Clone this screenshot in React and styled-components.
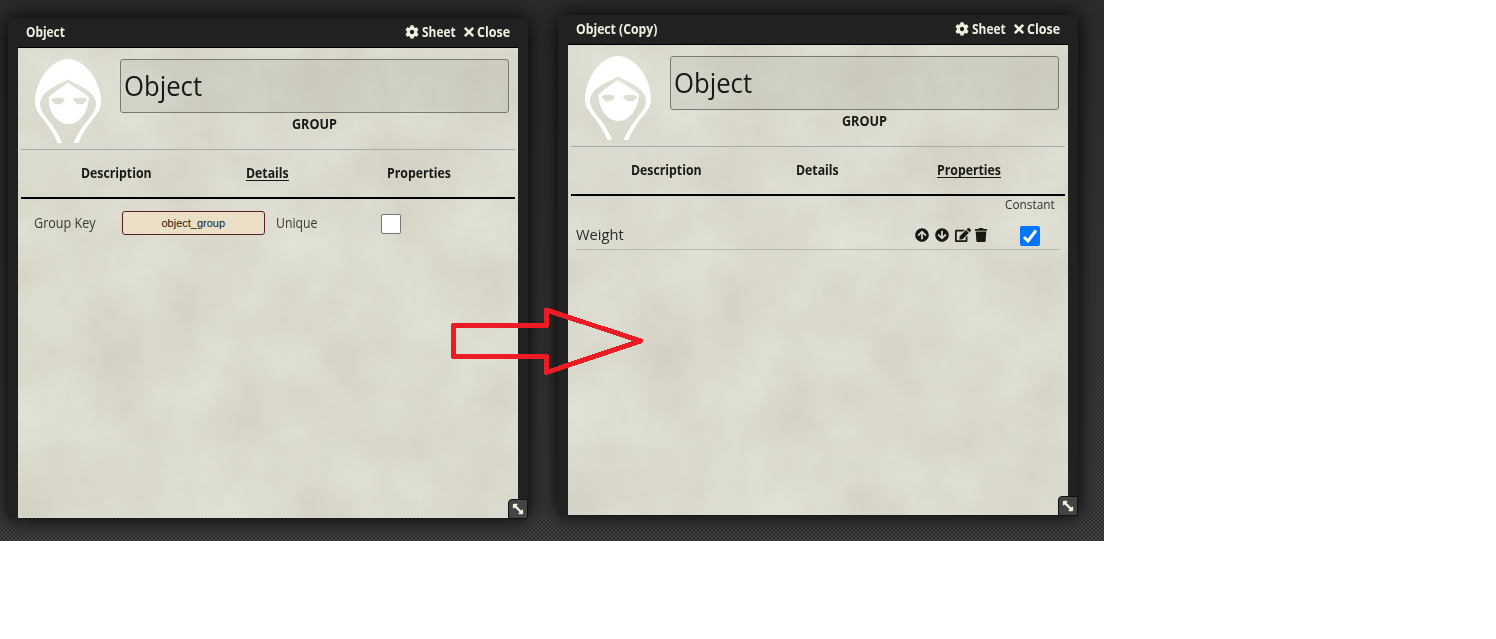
import React, { useLayoutEffect, useRef, useState } from "react";
import styled, { createGlobalStyle, css } from "styled-components";
import {
  FaCog,
  FaTimes,
  FaArrowCircleUp,
  FaArrowCircleDown,
  FaEdit,
  FaTrash,
  FaArrowsAltH,
} from "react-icons/fa";

const GlobalStyle = createGlobalStyle`
  * { box-sizing: border-box; }
  body { margin: 0; background: #fff; font-family: "Open Sans", "Noto Sans", sans-serif; color: #191813; }
`;

const Desktop = styled.main`
  position: relative;
  display: flex;
  gap: 30px;
  width: 1104px;
  height: 541px;
  padding: 15px 0 0 8px;
  overflow: hidden;
  background:
    repeating-linear-gradient(45deg, rgba(0, 0, 0, 0.2) 0 1px, transparent 1px 2.828px),
    repeating-linear-gradient(-45deg, rgba(0, 0, 0, 0.2) 0 1px, transparent 1px 2.828px),
    linear-gradient(#353535, #454545);
`;

const Window = styled.section`
  position: relative;
  display: flex;
  flex-direction: column;
  flex: none;
  width: 520px;
  height: 500px;
  margin-top: ${(p) => p.$drop}px;
  padding: 0 10px;
  background:
    repeating-linear-gradient(45deg, rgba(0, 0, 0, 0.16) 0 1px, transparent 1px 2.828px),
    #242424;
  box-shadow: 0 0 20px #000;
`;

const TitleBar = styled.header`
  display: flex;
  align-items: center;
  flex: none;
  height: 30px;
  padding: 0 8px 1px;
  border-bottom: 1px solid #000;
  color: #f0f0e0;
`;

const TitleActions = styled.div`
  display: flex;
  align-items: center;
  gap: 6px;
  margin-left: auto;
`;

const TitleAction = styled.span`
  display: flex;
  align-items: center;
  gap: ${(p) => p.$gap}px;
`;

const Sheet = styled.div`
  position: relative;
  flex: 1;
  padding: 0 3px;
  background: #dad9cd;
`;

const Parchment = styled.svg`
  position: absolute;
  inset: 0;
  width: 100%;
  height: 100%;
`;

const SheetBody = styled.div`
  position: relative;
`;

const SheetHeader = styled.div`
  display: flex;
  height: 102px;
  padding: 11px 6px 0 14px;
  border-bottom: 1px solid #aaa;
`;

const Avatar = styled.svg`
  flex: none;
  width: 66px;
  height: 84px;
  margin-right: 19px;
`;

const NameColumn = styled.div`
  display: flex;
  flex-direction: column;
  align-items: center;
  gap: 1px;
  flex: 1;
`;

const NameField = styled.div`
  display: flex;
  align-items: center;
  align-self: stretch;
  height: 54px;
  padding: 0 0 1px 3px;
  border: 1px solid #7a7971;
  border-radius: 3px;
  background: rgba(0, 0, 0, 0.05);
`;

const Tabs = styled.nav`
  display: flex;
  height: 49px;
  padding: 0 20px 2px;
  border-bottom: 2px solid #000;
`;

const Tab = styled.div`
  display: flex;
  flex: 1;
  align-items: center;
  justify-content: center;
`;

const DetailsRow = styled.div`
  display: flex;
  align-items: center;
  height: 24px;
  margin: 12px 13px 0;
`;

const KeyField = styled.div`
  display: flex;
  align-items: center;
  justify-content: center;
  width: 143px;
  height: 24px;
  margin: 0 11px 0 26px;
  border: 1px solid #561f24;
  border-radius: 3px;
  background: #ebdfc5;
`;

const CheckBox = styled.span`
  display: flex;
  align-items: center;
  justify-content: center;
  width: 20px;
  height: 20px;
  border-radius: 2px;
  background: ${(p) => (p.$checked ? "#0075ff" : "#fff")};
  border: ${(p) => (p.$checked ? "none" : "1px solid #767676")};
  svg { width: 16px; height: 16px; }
`;

const UniqueCheck = styled.div`
  margin: 2px 0 0 64px;
`;

const ColumnHeads = styled.div`
  display: flex;
  align-items: flex-end;
  justify-content: flex-end;
  height: 17px;
  padding: 0 10px 0 0;
`;

const PropertyRow = styled.div`
  display: flex;
  align-items: center;
  height: 37px;
  margin: 0 5px;
  padding: 7px 20px 0 0;
  border-bottom: 1px solid #b8b8b3;
`;

const RowControls = styled.div`
  display: flex;
  align-items: center;
  gap: 6px;
  margin: 0 32px 0 auto;
`;

const DeleteIcon = styled(FaTrash)`
  margin-left: -3px;
`;

const RowCheck = styled.div`
  margin-top: 2px;
`;

const ResizeHandle = styled.div`
  position: absolute;
  right: 0;
  bottom: -1px;
  display: flex;
  align-items: center;
  justify-content: center;
  width: 20px;
  height: 20px;
  border: 1px solid #111;
  border-radius: 4px 0 0 0;
  background: #444;
  color: #f0f0e0;
  svg { transform: rotate(45deg); }
`;

const FlowArrow = styled.svg`
  position: absolute;
  left: 448px;
  top: 304px;
  width: 200px;
  height: 76px;
`;

const TextSlot = styled.span`
  display: inline-flex;
  flex: none;
  width: ${(p) => p.$width}px;
  height: ${(p) => Math.round(p.$size * 1.4)}px;
  line-height: ${(p) => Math.round(p.$size * 1.4)}px;
  font-size: ${(p) => p.$size}px;
  font-weight: ${(p) => p.$weight};
  color: ${(p) => p.$color || "inherit"};
  white-space: nowrap;
  ${(p) => p.$sans && css`font-family: "Liberation Sans", Arial, sans-serif;`}
  ${(p) => p.$active && css`
    background: linear-gradient(currentColor, currentColor) 0 calc(100% - 2px) / 100% 1px no-repeat;
  `}
`;

const TextRun = styled.span`
  display: inline-block;
  flex: none;
  transform-origin: 0 50%;
`;

/* Condenses a run of text so that it fills exactly the width of its slot. */
function Label({ children, width, size = 14, weight = 400, sans, active, color }) {
  const run = useRef(null);
  const [scale, setScale] = useState(1);
  useLayoutEffect(() => {
    setScale(width / run.current.offsetWidth);
  }, [width]);
  return (
    <TextSlot $width={width} $size={size} $weight={weight} $sans={sans} $active={active} $color={color}>
      <TextRun ref={run} style={{ transform: `scaleX(${scale})` }}>{children}</TextRun>
    </TextSlot>
  );
}

function HoodedFigure() {
  return (
    <Avatar viewBox="0 0 66 84">
      <path
        fill="#fff"
        d="M33 0C41 0 49 5 56 14C62 22 66 33 66 42C66 47 65 50.500 62.700 53.500C60 58 57 61 54.500 64.500C51 70 48 74 46 78L43.500 84H38.500C41 78 44 73 47.500 68C51 63 54 60 56.500 56C59.500 52 61 49 61 45C61 41 59 37 55 33C49 28 41 25 33 20.500C25 25 17 28 11 33C7 37 5 41 5 45C5 49 6.500 52 9.500 56C12 60 15 63 18.500 68C22 73 25 78 27 84H22.500L20 78C18 74 15 70 11.500 64.500C9 61 6 58 3.300 53.500C1 50.500 0 47 0 42C0 33 4 22 10 14C17 5 25 0 33 0Z"
      />
      <path
        fill="#fff"
        fillRule="evenodd"
        d="M33 24C40 29 48 33 54 38.500C53.500 45 52 51 48 57C44 62 39 65 33.500 65C28 65 23 62 19 57C15 51 14 45 13.500 38.500C19 33 26 29 33 24ZM16.500 40C17.500 43 20 45.300 23 45.300C27 45.300 29 43 30 40C26 38.400 20 38.400 16.500 40ZM38 40C39 43 42 45.300 45 45.300C49 45.300 51 43 52 40C48 38.400 42 38.400 38 40Z"
      />
    </Avatar>
  );
}

function ParchmentTexture({ id }) {
  return (
    <Parchment aria-hidden="true">
      <filter id={id} x="0" y="0" width="100%" height="100%" colorInterpolationFilters="sRGB">
        <feTurbulence type="fractalNoise" baseFrequency="0.014 0.012" numOctaves="6" seed="8" />
        <feColorMatrix
          values="0.09 0 0 0 0.815
                  0.09 0 0 0 0.810
                  0.1 0 0 0 0.757
                  0 0 0 0 1"
        />
      </filter>
      <rect width="100%" height="100%" filter={`url(#${id})`} />
    </Parchment>
  );
}

const TABS = [
  ["Description", 71],
  ["Details", 43],
  ["Properties", 64],
];

function SheetWindow({ id, title, titleWidth, drop, active, children }) {
  return (
    <Window $drop={drop}>
      <TitleBar>
        <Label width={titleWidth} weight={700}>{title}</Label>
        <TitleActions>
          <TitleAction $gap={3}>
            <FaCog size={14} />
            <Label width={34} weight={700}>Sheet</Label>
          </TitleAction>
          <TitleAction $gap={1}>
            <FaTimes size={14} />
            <Label width={33} weight={700}>Close</Label>
          </TitleAction>
        </TitleActions>
      </TitleBar>
      <Sheet>
        <ParchmentTexture id={id} />
        <SheetBody>
          <SheetHeader>
            <HoodedFigure />
            <NameColumn>
              <NameField>
                <Label width={78} size={27}>Object</Label>
              </NameField>
              <Label width={45} weight={700}>GROUP</Label>
            </NameColumn>
          </SheetHeader>
          <Tabs>
            {TABS.map(([name, width]) => (
              <Tab key={name}>
                <Label width={width} weight={700} active={name === active}>{name}</Label>
              </Tab>
            ))}
          </Tabs>
          {children}
        </SheetBody>
      </Sheet>
      <ResizeHandle>
        <FaArrowsAltH size={14} />
      </ResizeHandle>
    </Window>
  );
}

export default function App() {
  return (
    <>
      <GlobalStyle />
      <Desktop>
        <SheetWindow id="parchment-a" title="Object" titleWidth={39} drop={3} active="Details">
          <DetailsRow>
            <Label width={62} color="#3a3933">Group Key</Label>
            <KeyField>
              <Label width={64} size={11} sans>object_group</Label>
            </KeyField>
            <Label width={41} color="#3a3933">Unique</Label>
            <UniqueCheck>
              <CheckBox />
            </UniqueCheck>
          </DetailsRow>
        </SheetWindow>
        <SheetWindow id="parchment-b" title="Object (Copy)" titleWidth={81} drop={0} active="Properties">
          <ColumnHeads>
            <Label width={50} size={13} color="#33322c">Constant</Label>
          </ColumnHeads>
          <PropertyRow>
            <Label width={48} size={15} color="#2b2a24">Weight</Label>
            <RowControls>
              <FaArrowCircleUp size={14} />
              <FaArrowCircleDown size={14} />
              <FaEdit size={16} />
              <DeleteIcon size={14} />
            </RowControls>
            <RowCheck>
              <CheckBox $checked>
                <svg viewBox="0 0 16 16" fill="none" stroke="#fff" strokeWidth="3">
                  <path d="M2 9L6 13L14 2.500" />
                </svg>
              </CheckBox>
            </RowCheck>
          </PropertyRow>
        </SheetWindow>
        <FlowArrow viewBox="448 304 200 76" fill="none" stroke="#ed1c24" strokeWidth="5" strokeLinejoin="round" shapeRendering="crispEdges">
          <path d="M453.500 325.500H546.500V310L640.500 341L546.500 372.500V356.500H453.500Z" />
        </FlowArrow>
      </Desktop>
    </>
  );
}
